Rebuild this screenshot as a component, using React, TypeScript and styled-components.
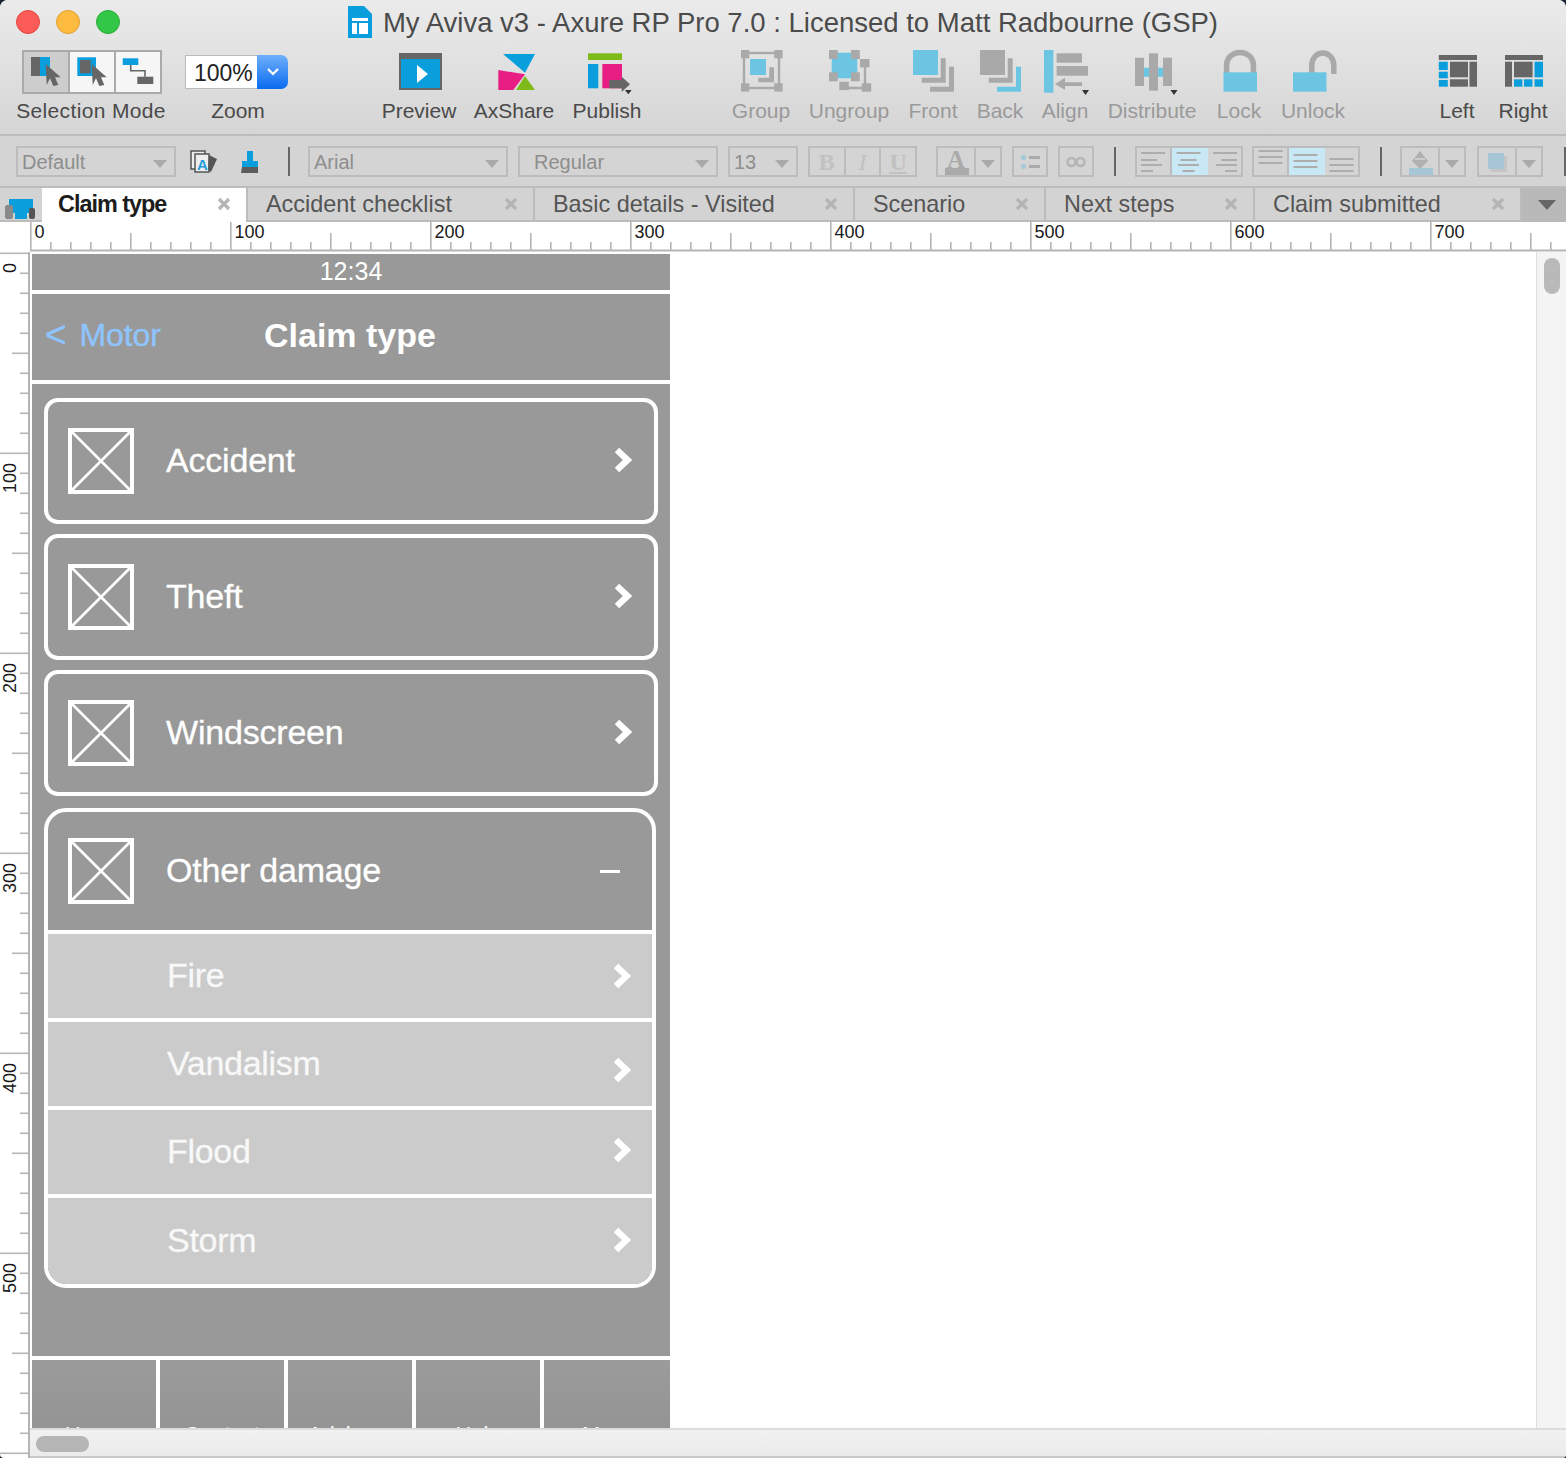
import React from "react";
import styled, { createGlobalStyle } from "styled-components";

const Global = createGlobalStyle`
  html, body { margin: 0; padding: 0; background: #1d2433; }
  * { box-sizing: border-box; }
  body { font-family: "Liberation Sans", Arial, sans-serif; }
`;

const Window = styled.div`
  width: 1566px; height: 1458px; display: flex; flex-direction: column;
  overflow: hidden; background: #fff; border-radius: 8px 8px 4px 4px;
`;
const Header = styled.header`
  height: 136px; flex: none; border-bottom: 2px solid #bcbcbc;
  background: linear-gradient(#ebebeb, #d5d5d5);
`;
const TitleRow = styled.div`
  position: relative; height: 42px; display: flex; align-items: center; justify-content: center; gap: 11px;
  padding-top: 2px;
`;
const Lights = styled.div`
  position: absolute; left: 16px; top: 10px; display: flex; gap: 16px;
`;
const Light = styled.span<{ $c: string; $b: string }>`
  width: 24px; height: 24px; border-radius: 50%; background: ${p => p.$c}; border: 1px solid ${p => p.$b};
`;
const Title = styled.div`
  font-size: 27.5px; color: #4b4b4b; white-space: nowrap; margin-top: 2px;
`;
const Toolbar = styled.div`
  display: flex; height: 92px;
`;
const Tool = styled.div<{ $w: number; $ml?: number }>`
  width: ${p => p.$w}px; margin-left: ${p => p.$ml ?? 0}px; flex: none;
  display: flex; flex-direction: column; align-items: center;
`;
const IconSlot = styled.div`
  height: 56px; padding-top: 6px; display: flex; justify-content: center;
  svg { display: block; overflow: visible; }
`;
const Label = styled.div<{ $dim?: boolean; $wide?: boolean }>`
  font-size: 21px; line-height: 26px; white-space: nowrap;
  letter-spacing: ${p => (p.$wide ? "0.35px" : "0")};
  color: ${p => (p.$dim ? "#9a9a9a" : "#4a4a4a")};
`;
const SelectionGroup = styled.div`
  width: 140px; height: 44px; margin: 2px 0 0 1px; display: grid; grid-template-columns: repeat(3, 1fr); gap: 2px;
  border: 2px solid #aaa; background: #aaa;
`;
const SelCell = styled.div<{ $active?: boolean }>`
  background: ${p => (p.$active ? "#cdcdcd" : "#f6f6f6")};
  svg { display: block; }
`;
const ZoomCombo = styled.div`
  width: 103px; height: 34px; margin: 7px 3px 0 0; display: flex;
`;
const ZoomValue = styled.div`
  flex: 1; background: #fff; border: 1px solid #bbb; border-right: 0; font-size: 23px; line-height: 35px;
  padding-left: 8px; color: #222; overflow: hidden; white-space: nowrap;
`;
const ZoomButton = styled.div`
  width: 31px; border-radius: 0 7px 7px 0; background: linear-gradient(#6fb0fb, #0a6bf0);
  display: flex; align-items: center; justify-content: center;
`;

const FormatBar = styled.div`
  height: 50px; flex: none; display: flex; align-items: center; padding: 1px 0 0 16px; background: #d4d4d4;
  svg { display: block; flex: none; overflow: visible; }
`;
const Select = styled.div<{ $w: number; $ml?: number; $pad?: number }>`
  position: relative; width: ${p => p.$w}px; margin-left: ${p => p.$ml ?? 0}px; height: 31px; flex: none;
  border: 2px solid #bcbcbc; font-size: 20px; line-height: 29px; color: #8e8e8e; padding-left: ${p => p.$pad ?? 4}px;
  &::after {
    content: ""; position: absolute; right: 7px; top: 12px; border-style: solid; border-width: 8px 7px 0 7px;
    border-color: #aaa transparent transparent transparent;
  }
`;
const Boxed = styled.div<{ $w: number; $ml?: number; $cols: string }>`
  width: ${p => p.$w}px; margin-left: ${p => p.$ml ?? 0}px; height: 31px; flex: none;
  display: grid; grid-template-columns: ${p => p.$cols}; gap: 2px; border: 2px solid #bcbcbc; background: #bcbcbc;
`;
const BoxCell = styled.div<{ $on?: boolean }>`
  min-width: 0;
  background: ${p => (p.$on ? "#c9e8f5" : "#d4d4d4")}; display: flex; align-items: center; justify-content: center;
  box-shadow: ${p => (p.$on ? "2px 0 0 #c9e8f5" : "none")};
`;
const Fmt = styled.span<{ $i?: boolean; $u?: boolean }>`
  font-family: "Liberation Serif", serif; font-size: 24px; line-height: 26px; color: #c1c1c1; font-weight: ${p => (p.$i ? 400 : 700)};
  font-style: ${p => (p.$i ? "italic" : "normal")}; text-decoration: ${p => (p.$u ? "underline" : "none")};
`;
const Caret = styled.span`
  border-style: solid; border-width: 8px 7px 0 7px; border-color: #aaa transparent transparent transparent; margin-top: 4px;
`;
const Sep = styled.div<{ $ml: number }>`
  width: 2px; height: 29px; margin-left: ${p => p.$ml}px; flex: none; background: #666;
`;
const Spot = styled.div<{ $w: number; $ml: number }>`
  width: ${p => p.$w}px; margin-left: ${p => p.$ml}px; flex: none;
`;

const TabBar = styled.nav`
  height: 36px; flex: none; display: flex; background: #d3d3d3; border-top: 2px solid #bcbcbc;
  box-shadow: inset 0 -2px 0 #bcbcbc;
`;
const TabIcon = styled.div`
  width: 42px; flex: none; padding: 8px 0 0 5px;
  svg { display: block; }
`;
const Tab = styled.div<{ $w: number; $active?: boolean }>`
  width: ${p => p.$w}px; flex: none; display: flex; align-items: center; justify-content: space-between;
  padding: 0 15px 2px ${p => (p.$active ? 16 : 18)}px; font-size: 23.4px; white-space: nowrap;
  border-right: 2px solid #bcbcbc;
  background: ${p => (p.$active ? "#fff" : "transparent")};
  color: ${p => (p.$active ? "#1c1c1c" : "#555")};
  font-weight: ${p => (p.$active ? 700 : 400)};
  letter-spacing: ${p => (p.$active ? "-1px" : "0")};
  svg { display: block; flex: none; }
`;
const TabMenu = styled.div`
  flex: 1; background: #b9b9b9; display: flex; align-items: center; justify-content: center; padding-left: 6px;
  &::after {
    content: ""; border-style: solid; border-width: 10px 9px 0 9px; border-color: #666 transparent transparent transparent;
  }
`;
const RulerSvg = styled.svg`
  display: block; flex: none; text { font-family: "Liberation Sans", Arial, sans-serif; fill: #1a1a1a; }
`;
const Workspace = styled.div`
  flex: 1; min-height: 0; display: flex;
`;
const WorkColumn = styled.div`
  flex: 1; min-width: 0; display: flex; flex-direction: column;
`;
const CanvasRow = styled.div`
  flex: 1; min-height: 0; display: flex;
`;
const Canvas = styled.main`
  flex: 1; overflow: hidden; padding: 2px 0 0 2px; background: #fff;
`;
const VScroll = styled.div`
  width: 30px; flex: none; background: #f4f4f4; border-left: 1px solid #dedede; padding: 6px 0 0 7px;
`;
const VThumb = styled.div`
  width: 16px; height: 36px; border-radius: 8px; background: #b9b9b9;
`;
const HScroll = styled.div`
  height: 30px; flex: none; background: linear-gradient(#f1f1f1, #ebebeb); border-top: 2px solid #dcdcdc;
  border-bottom: 2px solid #c9c9c9; padding: 6px 0 0 6px;
`;
const HThumb = styled.div`
  width: 53px; height: 16px; border-radius: 8px; background: #b5b5b5;
`;

const Phone = styled.div`
  width: 638px; background: #999; color: #fff; display: flex; flex-direction: column;
`;
const Status = styled.div`
  height: 40px; border-bottom: 4px solid #fff; text-align: center; font-size: 25px; line-height: 34px;
`;
const NavHead = styled.div`
  position: relative; height: 90px; border-bottom: 4px solid #fff; display: flex; align-items: center; justify-content: center;
  padding: 0 2px 4px 0; font-size: 34px; font-weight: 700;
`;
const Back = styled.div`
  position: absolute; left: 13px; top: 0; height: 82px; display: flex; align-items: center; gap: 13px;
  font-size: 32px; font-weight: 400; color: #8ec5ff; letter-spacing: -0.1px; -webkit-text-stroke: 0.3px #8ec5ff;
`;
const BackMark = styled.span`
  font-size: 37px;
`;
const List = styled.div`
  height: 972px; padding: 14px 0 0 12px; display: flex; flex-direction: column; gap: 10px;
`;
const Card = styled.div`
  width: 614px; height: 126px; border: 4px solid #fff; border-radius: 14px; display: flex; align-items: center;
  padding: 0 21px 0 20px;
`;
const Placeholder = styled.svg`
  display: block; flex: none; width: 66px; height: 66px;
`;
const ItemText = styled.span`
  font-size: 34px; letter-spacing: -0.2px; margin: 0 0 2px 32px; -webkit-text-stroke: 0.3px #fff;
`;
const Chev = styled.svg<{ $shift?: number }>`
  display: block; flex: none; margin-left: auto; width: 20px; height: 26px;
  transform: translateY(${p => p.$shift ?? 0}px);
`;
const Expanded = styled.div`
  width: 612px; height: 480px; margin-top: 2px; border: 4px solid #fff; border-radius: 22px; overflow: hidden;
`;
const ExpandedHead = styled.div`
  height: 118px; display: flex; align-items: center; padding: 0 32px 0 20px;
`;
const Minus = styled.span`
  width: 20px; height: 3px; margin-left: auto; background: #fff; flex: none;
`;
const SubRow = styled.div<{ $h: number }>`
  height: ${p => p.$h}px; background: #cbcbcb; border-top: 4px solid #fff; display: flex; align-items: center;
  padding: 0 20px 2px 119px; color: #f8f8f8;
`;
const SubText = styled.span`
  font-size: 34px; letter-spacing: -0.3px; -webkit-text-stroke: 0.3px #f8f8f8;
`;
const BottomNav = styled.div`
  height: 90px; border-top: 4px solid #fff; background: #fff; display: grid; grid-template-columns: repeat(4, 124px) 126px; gap: 4px;
`;
const NavCell = styled.div`
  background: linear-gradient(#9b9b9b, #929292); text-align: center; font-size: 22px; line-height: 26px; padding-top: 62px;
`;

const Arrow = () => (
  <polygon fill="#666" points="21.7,12 36.7,25.3 31,25.3 34.3,33 29.3,34 26,26.3 22.7,33" />
);
const G = "#a9a9a9";
const B = "#6cc5e3";
const BLUE = "#0a9fdc";
const DK = "#666";

const Tri = ({ x, y }: { x: number; y: number }) => <polygon fill="#333" points={`${x},${y} ${x + 7},${y} ${x + 3.5},${y + 5}`} />;

const PreviewIcon = () => (
  <svg width="48" height="48">
    <rect x="4" y="5" width="43" height="37" fill={DK} />
    <rect x="6" y="11" width="39" height="29" fill={BLUE} />
    <polygon points="22,17 33,26 22,35" fill="#fff" />
  </svg>
);
const AxIcon = () => (
  <svg width="48" height="48">
    <polygon points="13,6 45,6 35,24.7" fill={BLUE} />
    <polygon points="8.3,22 35,26.3 23.3,42 8.3,42" fill="#e91e84" />
    <polygon points="35,28 45,42 26,42" fill="#7fba1b" />
  </svg>
);
const PublishIcon = () => (
  <svg width="48" height="48">
    <rect x="5" y="5.3" width="34" height="6.7" fill="#7fba1b" />
    <rect x="5" y="16" width="10.3" height="24.3" fill={BLUE} />
    <rect x="19.3" y="16" width="19.7" height="24.3" fill="#e91e84" />
    <polygon points="26.3,32 38.7,32 38.7,28.7 47,36.3 38.7,44 38.7,40.3 26.3,40.3" fill={DK} />
    <polygon points="42,42 48.7,42 45.3,46.3" fill="#333" />
  </svg>
);
const GroupIcon = () => (
  <svg width="48" height="48">
    <rect x="7" y="5" width="35" height="35" fill="none" stroke={G} strokeWidth="2.4" />
    {[[4, 2], [37.3, 2], [4, 35.3], [37.3, 35.3]].map(([x, y]) => <rect key={`${x}-${y}`} x={x} y={y} width="8.3" height="8.3" fill={G} />)}
    <rect x="13" y="11" width="16" height="16" fill={B} />
    <path d="M32.3 19.3H37V34.3H21.3V29.7H32.3Z" fill={G} />
  </svg>
);
const UngroupIcon = () => (
  <svg width="48" height="48">
    <rect x="6.7" y="4.7" width="25.6" height="25.6" fill={B} />
    {[[4, 2], [26, 2], [4, 24.3], [26, 24.3]].map(([x, y]) => <rect key={`${x}-${y}`} x={x} y={y} width="8.8" height="9" fill={G} />)}
    <path d="M40 15V40H20" fill="none" stroke={G} strokeWidth="2.4" />
    {[[35, 11], [14.3, 33.7], [36.7, 35.3]].map(([x, y]) => <rect key={`${x}-${y}`} x={x} y={y} width="9.5" height="8.4" fill={G} />)}
  </svg>
);
const Stack = ({ a, b, c }: { a: string; b: string; c: string }) => (
  <svg width="48" height="48">
    <rect x="4" y="2" width="25" height="25" fill={a} />
    <path d="M31.7 10.3H36.7V34.7H12.7V29.7H31.7Z" fill={b} />
    <path d="M40 18.7H45V43.7H21V38.7H40Z" fill={c} />
  </svg>
);
const AlignIcon = () => (
  <svg width="48" height="48">
    <rect x="3" y="2" width="9.4" height="42.7" fill={B} />
    <rect x="15.6" y="5.3" width="25.4" height="9.4" fill={G} />
    <rect x="15.6" y="18" width="31.4" height="9.7" fill={G} />
    <polygon points="14,36 24,29.7 24,34.2 41,34.2 41,38 24,38 24,42" fill={G} />
    <Tri x={41} y={42} />
  </svg>
);
const DistributeIcon = () => (
  <svg width="48" height="48">
    <rect x="16" y="19.7" width="28" height="9" fill={B} />
    <rect x="7" y="9.7" width="9" height="28.3" fill={G} />
    <rect x="21" y="5.3" width="9" height="37.4" fill={G} />
    <rect x="35" y="9.7" width="9" height="28.3" fill={G} />
    <Tri x={42.5} y={42} />
  </svg>
);
const LockIcon = () => (
  <svg width="48" height="48">
    <path d="M11.6 26V17a13.4 12.6 0 0 1 26.8 0V26" fill="none" stroke={G} strokeWidth="5.5" />
    <rect x="8.5" y="24.3" width="33.5" height="19.4" fill={B} />
  </svg>
);
const UnlockIcon = () => (
  <svg width="48" height="48">
    <path d="M22.8 26V17a11 12 0 0 1 22 0V26" fill="none" stroke={G} strokeWidth="5.5" />
    <rect x="4" y="24.3" width="33.5" height="19.4" fill={B} />
  </svg>
);
const LeftIcon = () => (
  <svg width="48" height="48">
    <rect x="5.8" y="7" width="38.2" height="5" fill={DK} />
    <rect x="5.8" y="13.7" width="9" height="8.3" fill={BLUE} />
    <rect x="5.8" y="23.7" width="9" height="6.6" fill={BLUE} />
    <rect x="5.8" y="32" width="9" height="6.7" fill={BLUE} />
    <rect x="17" y="13.7" width="18" height="15.6" fill={DK} />
    <rect x="17" y="31.3" width="18" height="7.4" fill={DK} />
    <rect x="36.5" y="13.7" width="7.5" height="25" fill={DK} />
  </svg>
);
const RightIcon = () => (
  <svg width="48" height="48">
    <rect x="6" y="7" width="38" height="5" fill={DK} />
    <rect x="6" y="13.7" width="7" height="25" fill={DK} />
    <rect x="15" y="13.7" width="18.6" height="15.6" fill={DK} />
    <rect x="35.5" y="13.7" width="8.5" height="15.6" fill={BLUE} />
    <rect x="15" y="31.3" width="8.4" height="7.4" fill={BLUE} />
    <rect x="25" y="31.3" width="8.4" height="7.4" fill={BLUE} />
    <rect x="35.5" y="31.3" width="8.5" height="7.4" fill={BLUE} />
  </svg>
);

const XMark = ({ c = "#b4b4b4" }: { c?: string }) => (
  <svg width="14" height="14" viewBox="0 0 14 14"><path d="M2 2L12 12M12 2L2 12" stroke={c} strokeWidth="3.2" /></svg>
);

const Horizontal = () => {
  const ticks: React.ReactNode[] = [];
  for (let k = 0; k * 20 + 31 < 1566; k++) {
    const x = 31 + k * 20;
    const h = k % 10 === 0 ? 28 : k % 5 === 0 ? 17 : 8;
    ticks.push(<rect key={k} x={x - 1} y={28 - h} width="1.6" height={h} fill="#b5b5b5" />);
    if (k % 10 === 0) ticks.push(<text key={`t${k}`} x={x + 3.5} y={15.5} fontSize="18">{k * 10}</text>);
  }
  return (
    <RulerSvg width="1566" height="30">
      <rect x="30" y="27.5" width="1536" height="2" fill="#b5b5b5" />
      {ticks}
    </RulerSvg>
  );
};
const Vertical = () => {
  const ticks: React.ReactNode[] = [];
  for (let k = 0; k * 20 + 1 < 1206; k++) {
    const y = 1 + k * 20;
    const w = k % 10 === 0 ? 28 : k % 5 === 0 ? 16 : 8;
    ticks.push(<rect key={k} x={28 - w} y={y - 0.5} width={w} height="1.6" fill="#b5b5b5" />);
    if (k % 10 === 0) ticks.push(<text key={`t${k}`} transform={`translate(16 ${y + 10}) rotate(-90)`} textAnchor="end" fontSize="18">{k * 10}</text>);
  }
  return (
    <RulerSvg width="30" height="1206">
      <rect x="28" y="0" width="2" height="1206" fill="#b5b5b5" />
      {ticks}
    </RulerSvg>
  );
};

const PH = () => (
  <Placeholder viewBox="0 0 66 66">
    <rect x="2" y="2" width="62" height="62" fill="none" stroke="#fff" strokeWidth="4" />
    <path d="M3 3L63 63M63 3L3 63" stroke="#fff" strokeWidth="2.6" />
  </Placeholder>
);
const ChevIcon = ({ shift }: { shift?: number }) => (
  <Chev $shift={shift} viewBox="0 0 20 26">
    <path d="M4 3L14.5 13L4 23" fill="none" stroke="#fff" strokeWidth="6.5" />
  </Chev>
);

const Lines = ({ rows, anchor, w = 33 }: { rows: [number, number][]; anchor: "l" | "c" | "r"; w?: number }) => (
  <svg width={w} height="27">
    {rows.map(([y, len]) => {
      const x = anchor === "l" ? 4 : anchor === "r" ? w - 4 - len : (w - len) / 2;
      return <rect key={y} x={x} y={y} width={len} height="2" fill="#adadad" />;
    })}
  </svg>
);

const tabs = [
  { t: "Claim type", w: 206, active: true },
  { t: "Accident checklist", w: 287 },
  { t: "Basic details - Visited", w: 320 },
  { t: "Scenario", w: 191 },
  { t: "Next steps", w: 209 },
  { t: "Claim submitted", w: 267 },
];

const TOOLS_A = [
  { l: "Preview", w: 94, ml: 82, i: <PreviewIcon /> },
  { l: "AxShare", w: 96, i: <AxIcon /> },
  { l: "Publish", w: 90, i: <PublishIcon /> },
];
const TOOLS_B = [
  { l: "Group", w: 80, ml: 69, i: <GroupIcon /> },
  { l: "Ungroup", w: 96, i: <UngroupIcon /> },
  { l: "Front", w: 72, i: <Stack a={B} b={G} c={G} /> },
  { l: "Back", w: 62, i: <Stack a={G} b={G} c={B} /> },
  { l: "Align", w: 68, i: <AlignIcon /> },
  { l: "Distribute", w: 106, i: <DistributeIcon /> },
  { l: "Lock", w: 68, i: <LockIcon /> },
  { l: "Unlock", w: 80, i: <UnlockIcon /> },
];

const H_ROWS: [number, number][] = [[4, 24], [11, 16], [16, 21], [22, 12]];

export default function App() {
  return (
    <>
      <Global />
      <Window>
        <Header>
          <TitleRow>
            <Lights>
              <Light $c="#fc5b57" $b="#e2463f" />
              <Light $c="#fdbc40" $b="#e0a028" />
              <Light $c="#33c748" $b="#2aac39" />
            </Lights>
            <svg width="24" height="32" viewBox="0 0 24 32" style={{ display: "block" }}>
              <path d="M0 0H16L24 8V32H0Z" fill={BLUE} />
              <rect x="4" y="12" width="16" height="3" fill="#fff" />
              <rect x="4" y="17" width="5" height="11" fill="#fff" />
              <rect x="11" y="17" width="9" height="11" fill="#fff" />
            </svg>
            <Title>My Aviva v3 - Axure RP Pro 7.0 : Licensed to Matt Radbourne (GSP)</Title>
          </TitleRow>
          <Toolbar>
            <Tool $w={150} $ml={16}>
              <IconSlot>
                <SelectionGroup>
                  <SelCell $active>
                    <svg width="44" height="40">
                      <rect x="7" y="5" width="9" height="19" fill={DK} />
                      <rect x="16" y="5" width="10" height="19" fill={BLUE} />
                      <Arrow />
                    </svg>
                  </SelCell>
                  <SelCell>
                    <svg width="44" height="40">
                      <rect x="7.3" y="5.3" width="18.7" height="18.7" fill={BLUE} />
                      <rect x="10" y="8" width="10.7" height="13.3" fill={DK} />
                      <Arrow />
                    </svg>
                  </SelCell>
                  <SelCell>
                    <svg width="44" height="40">
                      <rect x="6.7" y="6.3" width="15.6" height="6.7" fill={BLUE} />
                      <path d="M14.7 13V18.7H29V24.7" fill="none" stroke={DK} strokeWidth="1.6" />
                      <rect x="21.3" y="24.7" width="16" height="7.3" fill={DK} />
                    </svg>
                  </SelCell>
                </SelectionGroup>
              </IconSlot>
              <Label $wide>Selection Mode</Label>
            </Tool>
            <Tool $w={104} $ml={20}>
              <IconSlot>
                <ZoomCombo>
                  <ZoomValue>100%</ZoomValue>
                  <ZoomButton>
                    <svg width="14" height="10" viewBox="0 0 14 10"><path d="M2 2L7 7L12 2" fill="none" stroke="#fff" strokeWidth="2.2" /></svg>
                  </ZoomButton>
                </ZoomCombo>
              </IconSlot>
              <Label>Zoom</Label>
            </Tool>
            {TOOLS_A.map(t => (
              <Tool key={t.l} $w={t.w} $ml={t.ml}>
                <IconSlot>{t.i}</IconSlot>
                <Label>{t.l}</Label>
              </Tool>
            ))}
            {TOOLS_B.map(t => (
              <Tool key={t.l} $w={t.w} $ml={t.ml}>
                <IconSlot>{t.i}</IconSlot>
                <Label $dim>{t.l}</Label>
              </Tool>
            ))}
            <Tool $w={66} $ml={71}>
              <IconSlot><LeftIcon /></IconSlot>
              <Label>Left</Label>
            </Tool>
            <Tool $w={66}>
              <IconSlot><RightIcon /></IconSlot>
              <Label>Right</Label>
            </Tool>
          </Toolbar>
        </Header>

        <FormatBar>
          <Select $w={160}>Default</Select>
          <Spot $w={28} $ml={14}>
            <svg width="28" height="28">
              <rect x="1" y="3" width="14" height="18" fill="#eee" stroke="#555" strokeWidth="1.5" />
              <rect x="5" y="6" width="14" height="18" fill="#eee" stroke="#555" strokeWidth="1.5" />
              <path d="M19 7L27 11L21 24L18 22Z" fill="#555" />
              <text x="7" y="22" fontSize="15" fontWeight="700" fontFamily="Liberation Sans" fill="#1e9ed8">A</text>
            </svg>
          </Spot>
          <Spot $w={22} $ml={21}>
            <svg width="22" height="28">
              <rect x="8" y="3" width="6" height="10" fill={BLUE} />
              <rect x="3" y="13" width="16" height="6" fill={BLUE} />
              <path d="M3 19H19V25H2Z" fill="#5c5c5c" />
            </svg>
          </Spot>
          <Sep $ml={27} />
          <Select $w={200} $ml={18}>Arial</Select>
          <Select $w={200} $ml={10} $pad={14}>Regular</Select>
          <Select $w={70} $ml={10}>13</Select>
          <Boxed $w={109} $ml={10} $cols="1fr 1fr 1fr">
            <BoxCell><Fmt>B</Fmt></BoxCell>
            <BoxCell><Fmt $i>I</Fmt></BoxCell>
            <BoxCell><Fmt $u>U</Fmt></BoxCell>
          </Boxed>
          <Boxed $w={66} $ml={19} $cols="36px 1fr">
            <BoxCell>
              <svg width="30" height="27">
                <text x="15" y="20" textAnchor="middle" fontFamily="Liberation Serif" fontWeight="700" fontSize="25" fill="#aaa">A</text>
                <rect x="4" y="20" width="24" height="7" fill="#aaa" />
              </svg>
            </BoxCell>
            <BoxCell><Caret /></BoxCell>
          </Boxed>
          <Boxed $w={36} $ml={10} $cols="1fr">
            <BoxCell>
              <svg width="28" height="24">
                <rect x="5" y="5" width="5" height="5" rx="2.5" fill="#a2c9d8" />
                <rect x="5" y="14" width="5" height="5" rx="2.5" fill="#a2c9d8" />
                <rect x="13" y="6" width="11" height="3" fill="#aaa" />
                <rect x="13" y="15" width="11" height="3" fill="#aaa" />
              </svg>
            </BoxCell>
          </Boxed>
          <Boxed $w={36} $ml={10} $cols="1fr">
            <BoxCell>
              <svg width="28" height="24">
                <circle cx="9.5" cy="12" r="4" fill="none" stroke="#b4b4b4" strokeWidth="2.5" />
                <circle cx="18.5" cy="12" r="4" fill="none" stroke="#b4b4b4" strokeWidth="2.5" />
              </svg>
            </BoxCell>
          </Boxed>
          <Sep $ml={20} />
          <Boxed $w={108} $ml={19} $cols="1fr 1fr 1fr">
            <BoxCell><Lines anchor="l" rows={H_ROWS} /></BoxCell>
            <BoxCell $on><Lines anchor="c" rows={H_ROWS} /></BoxCell>
            <BoxCell><Lines anchor="r" rows={H_ROWS} /></BoxCell>
          </Boxed>
          <Boxed $w={108} $ml={9} $cols="1fr 1fr 1fr">
            <BoxCell><Lines anchor="c" rows={[[2, 24], [8, 24], [14, 24]]} /></BoxCell>
            <BoxCell $on><Lines anchor="c" rows={[[6, 24], [12, 24], [18, 24]]} /></BoxCell>
            <BoxCell><Lines anchor="c" rows={[[10, 24], [16, 24], [22, 24]]} /></BoxCell>
          </Boxed>
          <Sep $ml={20} />
          <Boxed $w={66} $ml={18} $cols="36px 1fr">
            <BoxCell>
              <svg width="30" height="27">
                <path d="M15 3L23 13L15 21L7 13Z" fill="#b0b0b0" />
                <path d="M10 11H20" stroke="#d4d4d4" strokeWidth="1.5" />
                <rect x="4" y="20" width="24" height="7" fill="#a6c6d6" />
              </svg>
            </BoxCell>
            <BoxCell><Caret /></BoxCell>
          </Boxed>
          <Boxed $w={66} $ml={11} $cols="36px 1fr">
            <BoxCell>
              <svg width="30" height="27">
                <rect x="9" y="8" width="16" height="16" fill="#c5c5c5" />
                <rect x="6" y="5" width="16" height="16" fill="#a6c6d6" />
              </svg>
            </BoxCell>
            <BoxCell><Caret /></BoxCell>
          </Boxed>
          <Sep $ml={21} />
        </FormatBar>

        <TabBar>
          <TabIcon>
            <svg width="32" height="26">
              <rect x="4" y="3" width="24" height="14" fill={BLUE} />
              <rect x="10" y="17" width="12" height="6" fill={BLUE} />
              <rect x="0" y="9" width="8" height="14" rx="2" fill="#8a8a8a" />
              <rect x="24" y="12" width="6" height="11" rx="2" fill="#555" />
            </svg>
          </TabIcon>
          {tabs.map(t => (
            <Tab key={t.t} $w={t.w} $active={t.active}>
              {t.t}
              <XMark />
            </Tab>
          ))}
          <TabMenu />
        </TabBar>

        <Horizontal />

        <Workspace>
          <Vertical />
          <WorkColumn>
            <CanvasRow>
              <Canvas>
                <Phone>
                  <Status>12:34</Status>
                  <NavHead>
                    <Back><BackMark>&lt;</BackMark><span>Motor</span></Back>
                    Claim type
                  </NavHead>
                  <List>
                    {["Accident", "Theft", "Windscreen"].map(t => (
                      <Card key={t}><PH /><ItemText>{t}</ItemText><ChevIcon shift={-1} /></Card>
                    ))}
                    <Expanded>
                      <ExpandedHead><PH /><ItemText>Other damage</ItemText><Minus /></ExpandedHead>
                      <SubRow $h={88}><SubText>Fire</SubText><ChevIcon shift={1} /></SubRow>
                      <SubRow $h={88}><SubText>Vandalism</SubText><ChevIcon shift={7} /></SubRow>
                      <SubRow $h={88}><SubText>Flood</SubText><ChevIcon shift={-1} /></SubRow>
                      <SubRow $h={90}><SubText>Storm</SubText><ChevIcon /></SubRow>
                    </Expanded>
                  </List>
                  <BottomNav>
                    {["Home", "Contact", "Advisers", "Help", "More"].map(t => <NavCell key={t}>{t}</NavCell>)}
                  </BottomNav>
                </Phone>
              </Canvas>
              <VScroll><VThumb /></VScroll>
            </CanvasRow>
            <HScroll><HThumb /></HScroll>
          </WorkColumn>
        </Workspace>
      </Window>
    </>
  );
}
